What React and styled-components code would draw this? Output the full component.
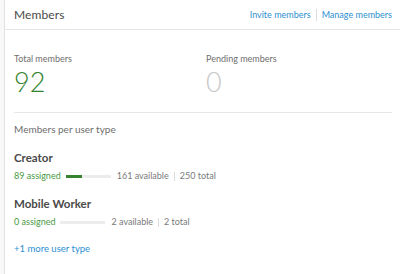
import styled, { createGlobalStyle } from 'styled-components';

const GlobalStyle = createGlobalStyle`
  html, body {
    margin: 0;
    padding: 0;
    background: #f8f8f8;
  }
  body {
    font-family: Lato, "Open Sans", sans-serif;
  }
`;

const Card = styled.div`
  margin-left: 4px;
  min-height: 274px;
  background: #fff;
  border-left: 1px solid #e2e2e2;
  box-sizing: border-box;
`;

const Header = styled.div`
  display: flex;
  align-items: center;
  justify-content: space-between;
  height: 29px;
  padding: 0 8px 0 9px;
  border-bottom: 1px solid #e6e6e6;
`;

const Title = styled.h2`
  margin: 0;
  font-size: 12px;
  font-weight: 400;
  color: #4a4a4a;
  letter-spacing: 0.1px;
`;

const Links = styled.div`
  display: flex;
  align-items: center;
  font-size: 9px;
`;

const Link = styled.a`
  color: #2d8fd0;
  text-decoration: none;
  cursor: pointer;
`;

const Sep = styled.span`
  width: 1px;
  height: 12px;
  background: #dcdcdc;
  margin: 0 5px;
`;

const Body = styled.div`
  padding: 0 8px 0 9px;
`;

const Stats = styled.div`
  display: grid;
  grid-template-columns: 192px 1fr;
  padding: 22px 0 14px;
  border-bottom: 1px solid #e6e6e6;
`;

const Stat = styled.div`
  display: flex;
  flex-direction: column;
`;

const StatLabel = styled.span`
  font-size: 9px;
  color: #6e6e6e;
  line-height: 14px;
`;

const StatValue = styled.span`
  font-size: 27px;
  font-weight: 300;
  line-height: 32px;
  color: ${(p) => (p.$muted ? '#c8c8c8' : '#35822f')};
`;

const SectionLabel = styled.div`
  font-size: 10px;
  color: #6e6e6e;
  margin-top: 9px;
  line-height: 14px;
`;

const TypeBlock = styled.div`
  margin-top: ${(p) => (p.$first ? '14px' : '13px')};
`;

const TypeName = styled.div`
  font-size: 11.5px;
  font-weight: 700;
  color: #4a4a4a;
  line-height: 16px;
`;

const TypeRow = styled.div`
  display: flex;
  align-items: center;
  font-size: 9px;
  line-height: 14px;
  color: #7a7a7a;
  margin-top: 3px;
`;

const Assigned = styled.span`
  color: #4a9a45;
  margin-right: 5px;
`;

const Track = styled.div`
  width: 45px;
  height: 3px;
  background: #ececec;
  margin-right: 6px;
`;

const Fill = styled.div`
  height: 100%;
  background: #35822f;
`;

const RowSep = styled.span`
  width: 1px;
  height: 9px;
  background: #dcdcdc;
  margin: 0 5px;
`;

const More = styled(Link)`
  display: block;
  font-size: 9.5px;
  margin-top: 14px;
`;

const types = [
  { name: 'Creator', assigned: 89, available: 161, total: 250 },
  { name: 'Mobile Worker', assigned: 0, available: 2, total: 2 },
];

export default function App() {
  return (
    <>
      <GlobalStyle />
      <Card>
        <Header>
          <Title>Members</Title>
          <Links>
            <Link>Invite members</Link>
            <Sep />
            <Link>Manage members</Link>
          </Links>
        </Header>
        <Body>
          <Stats>
            <Stat>
              <StatLabel>Total members</StatLabel>
              <StatValue>92</StatValue>
            </Stat>
            <Stat>
              <StatLabel>Pending members</StatLabel>
              <StatValue $muted>0</StatValue>
            </Stat>
          </Stats>
          <SectionLabel>Members per user type</SectionLabel>
          {types.map((t, i) => (
            <TypeBlock key={t.name} $first={i === 0}>
              <TypeName>{t.name}</TypeName>
              <TypeRow>
                <Assigned>{t.assigned} assigned</Assigned>
                <Track>
                  <Fill style={{ width: `${(t.assigned / t.total) * 100}%` }} />
                </Track>
                <span>{t.available} available</span>
                <RowSep />
                <span>{t.total} total</span>
              </TypeRow>
            </TypeBlock>
          ))}
          <More>+1 more user type</More>
        </Body>
      </Card>
    </>
  );
}
